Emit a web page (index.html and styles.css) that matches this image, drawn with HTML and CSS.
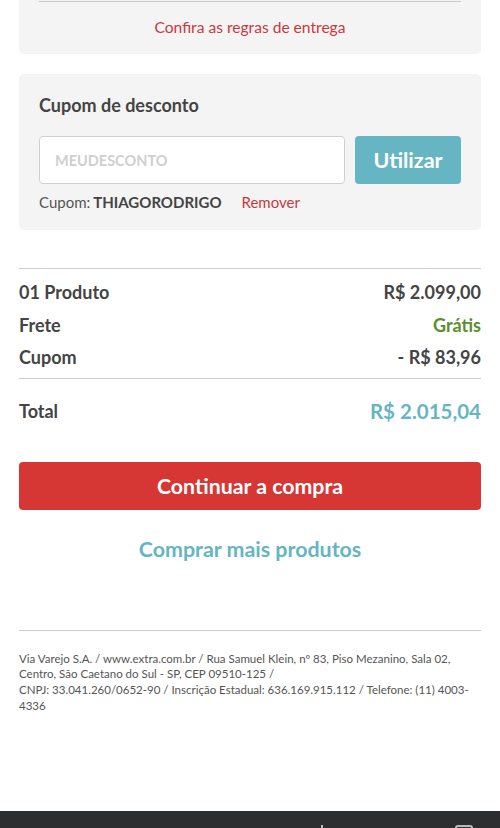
FILE: index.html
```html
<!DOCTYPE html>
<html lang="pt-BR">
<head>
<meta charset="utf-8">
<link rel="stylesheet" href="styles.css">
</head>
<body>
<div class="page">
  <section class="card card-top">
    <div class="card-top-line"></div>
    <a class="red-link center-link">Confira as regras de entrega</a>
  </section>

  <section class="card coupon">
    <h2 class="coupon-title">Cupom de desconto</h2>
    <div class="coupon-form">
      <div class="coupon-input">MEUDESCONTO</div>
      <button class="coupon-btn">Utilizar</button>
    </div>
    <div class="coupon-applied">
      <span class="coupon-label">Cupom:</span>
      <strong class="coupon-code">THIAGORODRIGO</strong>
      <a class="red-link remove">Remover</a>
    </div>
  </section>

  <section class="summary">
    <div class="row"><span>01 Produto</span><span>R$ 2.099,00</span></div>
    <div class="row"><span>Frete</span><span class="green">Grátis</span></div>
    <div class="row"><span>Cupom</span><span>- R$ 83,96</span></div>
    <div class="row total"><span>Total</span><span class="teal">R$ 2.015,04</span></div>
  </section>

  <button class="continue">Continuar a compra</button>
  <a class="more">Comprar mais produtos</a>

  <footer class="footer">
    <p>Via Varejo S.A. / www.extra.com.br / Rua Samuel Klein, nº 83, Piso Mezanino, Sala 02, Centro, São Caetano do Sul - SP, CEP 09510-125 /<br>CNPJ: 33.041.260/0652-90 / Inscrição Estadual: 636.169.915.112 / Telefone: (11) 4003-4336</p>
  </footer>
</div>
<div class="navbar">
  <span class="nav-mark"></span>
  <span class="nav-tab"></span>
</div>
</body>
</html>
```
FILE: styles.css
```css
* { box-sizing: border-box; }
html, body { margin: 0; padding: 0; }
body {
  width: 500px;
  height: 828px;
  overflow: hidden;
  font-family: Lato, "Open Sans", sans-serif;
  color: #444;
  background: #fff;
  position: relative;
}
.page {
  padding: 0 19px;
  display: flex;
  flex-direction: column;
}
.card {
  background: #f4f4f4;
  border-radius: 5px;
}
.card-top {
  height: 54px;
  padding: 0 20px;
  display: flex;
  flex-direction: column;
  align-items: center;
  border-top-left-radius: 0;
  border-top-right-radius: 0;
}
.card-top-line {
  align-self: stretch;
  height: 1px;
  background: #c9c9c9;
  margin-top: 1px;
}
.red-link { color: #c8393f; font-size: 15px; }
.center-link { margin-top: 16px; line-height: 18px; font-size: 15.6px; }
.coupon {
  margin-top: 20px;
  padding: 20px 20px 0;
  height: 156px;
}
.coupon-title {
  margin: 0;
  font-size: 18px;
  font-weight: 700;
  line-height: 22px;
  color: #444;
}
.coupon-form {
  display: flex;
  gap: 10px;
  margin-top: 20px;
}
.coupon-input {
  flex: 0 0 306px;
  height: 48px;
  background: #fff;
  border: 1px solid #cfcfcf;
  border-radius: 4px;
  padding-left: 15px;
  display: flex;
  align-items: center;
  font-size: 14.5px;
  font-weight: 700;
  color: #cfcfcf;
}
.coupon-btn {
  flex: 1;
  height: 48px;
  border: 0;
  border-radius: 4px;
  background: #66b5c2;
  color: #fff;
  font-family: inherit;
  font-size: 21.5px;
  font-weight: 700;
  padding: 0;
}
.coupon-applied {
  margin-top: 8px;
  font-size: 15px;
  line-height: 20px;
  display: flex;
  align-items: baseline;
}
.coupon-label { color: #555; margin-right: 3px; }
.coupon-code { font-weight: 700; color: #444; }
.remove { margin-left: 20px; }
.summary {
  margin-top: 38px;
  border-top: 1px solid #cdcdcd;
  padding-top: 7px;
}
.row {
  display: flex;
  justify-content: space-between;
  font-size: 18px;
  font-weight: 700;
  line-height: 22px;
  height: 32.5px;
  align-items: center;
}
.row.total {
  border-top: 1px solid #cdcdcd;
  margin-top: 4px;
  height: 65px;
}
.row.total .teal { font-size: 20.5px; }
.green { color: #5a8f2e; }
.teal { color: #66b5c2; }
.continue {
  margin-top: 19px;
  height: 48px;
  border: 0;
  border-radius: 4px;
  background: #d63634;
  color: #fff;
  font-family: inherit;
  font-size: 21.3px;
  font-weight: 700;
}
.more {
  margin-top: 27px;
  text-align: center;
  color: #66b5c2;
  font-size: 21.4px;
  font-weight: 700;
  line-height: 24px;
}
.footer {
  margin-top: 69px;
  border-top: 1px solid #cdcdcd;
  padding-top: 20px;
}
.footer p {
  margin: 0;
  font-size: 11.5px;
  line-height: 15.7px;
  color: #555;
}
.navbar {
  position: absolute;
  left: 0;
  right: 0;
  bottom: 0;
  height: 17px;
  background: #2c2d2f;
}
.nav-mark {
  position: absolute;
  left: 321px;
  top: 14px;
  width: 2px;
  height: 3px;
  background: #bbb;
}
.nav-tab {
  position: absolute;
  left: 455px;
  top: 14px;
  width: 18px;
  height: 8px;
  border: 2px solid #bbb;
  border-radius: 3px;
}
```
